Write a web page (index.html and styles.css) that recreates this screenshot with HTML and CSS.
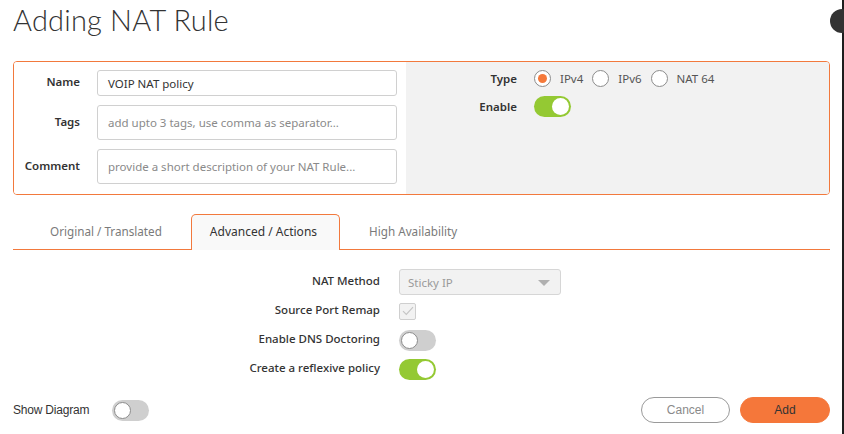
FILE: index.html
```html
<!DOCTYPE html>
<html>
<head>
<meta charset="utf-8">
<link rel="stylesheet" href="styles.css">
</head>
<body>
<div class="page">
  <h1 class="title">Adding NAT Rule</h1>

  <div class="panel">
    <div class="panel-left">
      <div class="frow">
        <label class="flabel">Name</label>
        <div class="input input-short"><span class="value">VOIP NAT policy</span></div>
      </div>
      <div class="frow">
        <label class="flabel">Tags</label>
        <div class="input"><span class="ph">add upto 3 tags, use comma as separator...</span></div>
      </div>
      <div class="frow">
        <label class="flabel">Comment</label>
        <div class="input"><span class="ph">provide a short description of your NAT Rule...</span></div>
      </div>
    </div>
    <div class="panel-right">
      <div class="rrow">
        <label class="rlabel">Type</label>
        <div class="radios">
          <span class="radio checked"></span><span class="rtext">IPv4</span>
          <span class="radio"></span><span class="rtext">IPv6</span>
          <span class="radio"></span><span class="rtext">NAT 64</span>
        </div>
      </div>
      <div class="rrow rrow-enable">
        <label class="rlabel">Enable</label>
        <span class="toggle on"><span class="knob"></span></span>
      </div>
    </div>
  </div>

  <div class="tabs">
    <div class="tab">Original / Translated</div>
    <div class="tab active">Advanced / Actions</div>
    <div class="tab">High Availability</div>
  </div>

  <div class="form">
    <div class="grow">
      <label class="glabel">NAT Method</label>
      <div class="select"><span>Sticky IP</span><span class="caret"></span></div>
    </div>
    <div class="grow">
      <label class="glabel">Source Port Remap</label>
      <span class="checkbox">
        <svg width="12" height="10" viewBox="0 0 12 10"><path d="M1 5.2 L4.3 8.4 L11 1.2" fill="none" stroke="#c4c4c4" stroke-width="1.1"/></svg>
      </span>
    </div>
    <div class="grow">
      <label class="glabel">Enable DNS Doctoring</label>
      <span class="toggle off"><span class="knob"></span></span>
    </div>
    <div class="grow">
      <label class="glabel">Create a reflexive policy</label>
      <span class="toggle on"><span class="knob"></span></span>
    </div>
  </div>

  <div class="footer">
    <div class="footer-left">
      <span class="fl-text">Show Diagram</span>
      <span class="toggle off"><span class="knob"></span></span>
    </div>
    <div class="footer-right">
      <button class="btn btn-cancel">Cancel</button>
      <button class="btn btn-add">Add</button>
    </div>
  </div>
</div>
<div class="edge"><span class="edge-dot"></span></div>
</body>
</html>
```
FILE: styles.css
```css
* { box-sizing: border-box; }
html, body { margin: 0; padding: 0; background: #fff; }
body {
  width: 844px;
  height: 434px;
  overflow: hidden;
  position: relative;
  font-family: "Noto Sans", "Open Sans", sans-serif;
  color: #333;
}
.page {
  padding: 0 14px 0 13px;
}
.title {
  margin: 0;
  padding-top: 2px;
  font-family: "Lato", "Noto Sans", sans-serif;
  font-weight: 300;
  font-size: 29px;
  line-height: 36px;
  height: 61px;
  color: #333;
  letter-spacing: 0.2px;
}

/* panel */
.panel {
  display: flex;
  height: 134px;
  border: 1px solid #f2793d;
  border-radius: 4px;
  overflow: hidden;
}
.panel-left {
  width: 392px;
  background: #fff;
  padding: 8px 0 0 0;
  display: flex;
  flex-direction: column;
  gap: 9px;
}
.frow {
  display: flex;
  align-items: center;
}
.flabel {
  width: 66px;
  text-align: right;
  font-size: 11.5px;
  font-weight: 600;
  color: #333;
  margin-right: 17px;
  padding-bottom: 3px;
}
.input {
  width: 300px;
  height: 35px;
  border: 1px solid #d0d0d0;
  border-radius: 3px;
  background: #fff;
  display: flex;
  align-items: center;
  padding-left: 10px;
  font-size: 11.5px;
}
.input-short { height: 26px; }
.value { color: #333; }
.ph { color: #8a8a8a; }

.panel-right {
  flex: 1;
  background: #f2f2f2;
  padding-top: 7px;
}
.rrow {
  display: flex;
  align-items: center;
  height: 18px;
}
.rrow-enable { margin-top: 8px; height: 22px; }
.rlabel {
  width: 111px;
  text-align: right;
  font-size: 11.5px;
  font-weight: 600;
  margin-right: 17px;
}
.radios { display: flex; align-items: center; }
.radio {
  width: 17px;
  height: 17px;
  border: 1px solid #8c8c8c;
  border-radius: 50%;
  background: #fff;
  position: relative;
  margin-right: 9px;
}
.radio.checked::after {
  content: "";
  position: absolute;
  left: 3px; top: 3px;
  width: 9px; height: 9px;
  border-radius: 50%;
  background: #f5793b;
}
.rtext {
  font-size: 11.5px;
  color: #555;
  margin-right: 9px;
}

/* toggles */
.toggle {
  display: inline-block;
  position: relative;
  width: 37px;
  height: 21px;
  border-radius: 11px;
}
.toggle.on { background: #94c933; }
.toggle.off { background: #cfcfcf; }
.knob {
  position: absolute;
  top: 2px;
  width: 17px;
  height: 17px;
  border-radius: 50%;
  background: #fff;
}
.toggle.on .knob { right: 2px; }
.toggle.off .knob { left: 2px; border: 1.5px solid #8c8c8c; }

/* tabs */
.tabs {
  margin-top: 19px;
  display: flex;
  gap: 10px;
  padding-left: 18px;
  border-bottom: 1px solid #f2793d;
  height: 36px;
}
.tab {
  height: 35px;
  padding: 0 18px;
  display: flex;
  align-items: center;
  font-size: 11.7px;
  color: #7a7a7a;
  border: 1px solid transparent;
  border-bottom: none;
  padding-bottom: 2px;
}
.tab.active {
  background: #f9f9f9;
  color: #333;
  border-color: #f2793d;
  border-radius: 5px 5px 0 0;
  height: 36px;
  margin-bottom: -1px;
  padding: 0 22px 2px 18px;
  font-size: 12px;
}

/* form */
.form {
  margin-top: 18px;
  display: flex;
  flex-direction: column;
  gap: 1px;
}
.grow {
  display: flex;
  align-items: center;
  height: 28px;
}
.glabel {
  width: 367px;
  text-align: right;
  font-size: 11.5px;
  font-weight: 500;
  color: #333;
  margin-right: 19px;
  padding-bottom: 3px;
}
.select {
  width: 162px;
  height: 26px;
  border: 1px solid #d6d6d6;
  border-radius: 3px;
  background: #f2f2f2;
  display: flex;
  align-items: center;
  justify-content: space-between;
  padding: 0 10px 0 8px;
  font-size: 11.5px;
  color: #9a9a9a;
}
.caret {
  width: 0; height: 0;
  border-left: 6px solid transparent;
  border-right: 6px solid transparent;
  border-top: 6px solid #b0b0b0;
  margin-top: 2px;
}
.checkbox {
  width: 17px;
  height: 17px;
  border: 1px solid #cfcfcf;
  border-radius: 2px;
  background: #f2f2f2;
  display: flex;
  align-items: center;
  justify-content: center;
}

/* footer */
.footer {
  margin-top: 14px;
  display: flex;
  align-items: center;
  justify-content: space-between;
}
.footer-left { display: flex; align-items: center; }
.fl-text {
  font-family: "Liberation Sans", Arial, sans-serif;
  font-size: 12px;
  color: #333;
  margin-right: 23px;
  letter-spacing: -0.2px;
}
.footer-right { display: flex; gap: 10px; }
.btn {
  width: 90px;
  height: 26px;
  border-radius: 13px;
  font-family: "Liberation Sans", Arial, sans-serif;
  font-size: 12px;
  cursor: pointer;
}
.btn-cancel {
  background: #fff;
  border: 1px solid #9a9a9a;
  color: #8a8a8a;
  width: 89px;
}
.btn-add {
  background: #f5773a;
  border: 1px solid #f5773a;
  color: #333;
}

/* right-edge decoration */
.edge {
  position: absolute;
  top: 0;
  right: 0;
  width: 2px;
  height: 434px;
  background: #1e1e1e;
}
.edge-dot {
  position: absolute;
  top: 9px;
  right: -10px;
  width: 24px;
  height: 24px;
  border-radius: 50%;
  background: #333;
}
```
